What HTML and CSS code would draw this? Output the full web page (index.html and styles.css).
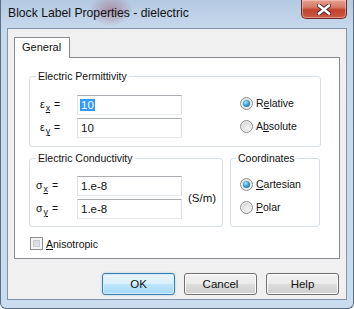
FILE: index.html
```html
<!DOCTYPE html>
<html lang="en">
<head>
  <meta charset="UTF-8" />
  <title>Block Label Properties - dielectric</title>
  <link rel="stylesheet" href="styles.css">
</head>
<body>

  <div class="window">
    <div class="titlebar">
      <span class="title">Block Label Properties - dielectric</span>
      <div class="close-btn">
        <svg width="14" height="11" viewBox="0 0 14 11">
          <path d="M2 1.5 L12 9.5 M12 1.5 L2 9.5" stroke="#4a2a28" stroke-width="4.4" stroke-linecap="round" />
          <path d="M2 1.5 L12 9.5 M12 1.5 L2 9.5" stroke="#ffffff" stroke-width="2.6" stroke-linecap="round" />
        </svg>
      </div>
    </div>

    <div class="client">
      <div class="tabs">
        <div class="tab active">General</div>
      </div>

      <div class="tab-panel">
        <!-- permittivity -->
        <fieldset class="group group-perm">
          <legend>Electric Permittivity</legend>
          <div class="fields">
            <div class="field-row">
              <span class="sym-label">&epsilon;<sub><u>x</u></sub> =</span>
              <div class="edit"><span class="selected">10</span></div>
            </div>
            <div class="field-row">
              <span class="sym-label">&epsilon;<sub><u>y</u></sub> =</span>
              <div class="edit">10</div>
            </div>
          </div>
          <div class="radios radios-perm">
            <div class="radio-row"><span class="radio checked"></span><span>R<u>e</u>lative</span></div>
            <div class="radio-row"><span class="radio"></span><span>A<u>b</u>solute</span></div>
          </div>
        </fieldset>

        <div class="group-row">
          <fieldset class="group group-cond">
            <legend>Electric Conductivity</legend>
            <div class="fields">
              <div class="field-row">
                <span class="sym-label">&sigma;<sub><u>x</u></sub> =</span>
                <div class="edit">1.e-8</div>
              </div>
              <div class="field-row">
                <span class="sym-label">&sigma;<sub><u>y</u></sub> =</span>
                <div class="edit">1.e-8</div>
              </div>
            </div>
            <span class="unit">(S/m)</span>
          </fieldset>

          <fieldset class="group group-coord">
            <legend>Coordinates</legend>
            <div class="radios">
              <div class="radio-row"><span class="radio checked"></span><span><u>C</u>artesian</span></div>
              <div class="radio-row"><span class="radio"></span><span><u>P</u>olar</span></div>
            </div>
          </fieldset>
        </div>

        <div class="check-row"><span class="checkbox"></span><span><u>A</u>nisotropic</span></div>
      </div>

      <div class="buttons">
        <button class="btn default">OK</button>
        <button class="btn">Cancel</button>
        <button class="btn">Help</button>
      </div>
    </div>
  </div>

</body>
</html>
```

FILE: styles.css
```css
body {
  margin: 0;
  font-family: 'Liberation Sans', Arial, sans-serif;
  font-size: 10.5px;
  color: #111;
}

.window {
  width: 354px;
  height: 309px;
  box-sizing: border-box;
  display: flex;
  flex-direction: column;
  border: 1px solid #5f6f82;
  border-top: none;
  border-radius: 0 0 6px 6px;
  background:
    radial-gradient(ellipse 22px 16px at 110px 10px, rgba(150, 70, 90, 0.45), rgba(150, 70, 90, 0) 100%),
    linear-gradient(#b4c9e2 0, #c6d8ec 28px, #cadcef 100%);
}

.titlebar {
  height: 28px;
  display: flex;
  justify-content: space-between;
  align-items: flex-start;
}

.title {
  font-size: 12.2px;
  padding: 6px 0 0 7px;
}

.close-btn {
  width: 46px;
  height: 19px;
  margin-right: 6px;
  box-sizing: border-box;
  border: 1px solid #6e2a22;
  border-top: none;
  border-radius: 0 0 5px 5px;
  background: linear-gradient(#e6a090 0, #d67a68 40%, #c2422f 55%, #c85a45 100%);
  box-shadow: inset 0 0 0 1px rgba(255, 210, 200, 0.5);
  display: flex;
  justify-content: center;
  align-items: center;
}

.client {
  flex: 1;
  margin: 0 6px 8px;
  border: 1px solid #8494a8;
  background: #f0f0f0;
  padding: 8px 6px 0;
  display: flex;
  flex-direction: column;
}

.tabs {
  display: flex;
}

.tab {
  height: 21px;
  box-sizing: border-box;
  padding: 0 8px 0 7px;
  line-height: 19px;
  font-size: 11px;
  border: 1px solid #898c95;
  border-bottom: none;
  background: #fff;
  position: relative;
  z-index: 1;
  margin-bottom: -1px;
}

.tab-panel {
  height: 202px;
  box-sizing: border-box;
  border: 1px solid #898c95;
  background: #fff;
  padding: 12px 18px 0 14px;
}

.group {
  margin: 0;
  min-width: 0;
  border: 1px solid #d5dfe5;
  border-radius: 3px;
  padding: 12px 0 8px 10px;
  display: flex;
}

.group legend {
  padding: 0 2px;
  margin-left: -4px;
  line-height: 13px;
}

.fields {
  display: flex;
  flex-direction: column;
  gap: 3px;
}

.field-row {
  display: flex;
  align-items: center;
  height: 20px;
}

.sym-label {
  width: 37px;
  padding-top: 1px;
}

.sym-label sub {
  font-size: 9px;
  vertical-align: -3px;
  margin-left: 1px;
  margin-right: 1px;
}

.edit {
  width: 105px;
  height: 20px;
  box-sizing: border-box;
  border: 1px solid;
  border-color: #abadb3 #dbdfe6 #e3e9ef #e2e3ea;
  background: #fff;
  padding-left: 3px;
  line-height: 18px;
  font-size: 11.5px;
}

.selected {
  background: #3399ff;
  color: #fff;
  padding: 0 1px;
  margin-left: -1px;
}

.radios {
  display: flex;
  flex-direction: column;
  gap: 3px;
  margin-top: -2px;
}

.radios-perm {
  margin-left: 58px;
}

.radio-row {
  display: flex;
  align-items: center;
  height: 20px;
  gap: 3px;
}

.radio {
  width: 13px;
  height: 13px;
  box-sizing: border-box;
  border-radius: 50%;
  border: 1px solid #8e8f8f;
  background: radial-gradient(circle at 60% 65%, #f4f4f4 0, #d8d8d8 70%, #c8c8c8 100%);
  box-shadow: inset 0 0 0 1px #f0f0f0;
  position: relative;
}

.radio.checked::after {
  content: "";
  position: absolute;
  left: 2px;
  top: 2px;
  width: 7px;
  height: 7px;
  border-radius: 50%;
  background: radial-gradient(circle at 40% 35%, #b4ecff 0, #3c9fd0 45%, #115a86 100%);
}

.group-row {
  display: flex;
  gap: 7px;
  margin-top: 5px;
}

.group-cond {
  width: 194px;
  box-sizing: border-box;
  padding: 11px 0 7px 6px;
}

.group-cond legend {
  margin-left: 0;
}

.group-cond .sym-label {
  width: 41px;
}

.unit {
  align-self: center;
  margin-left: 6px;
  font-size: 11.5px;
}

.group-coord {
  width: 90px;
  box-sizing: border-box;
  padding: 11px 0 7px 9px;
}

.check-row {
  display: flex;
  align-items: center;
  gap: 3px;
  margin: 10px 0 0 1px;
  height: 13px;
}

.checkbox {
  width: 13px;
  height: 13px;
  box-sizing: border-box;
  border: 1px solid #8e8f8f;
  box-shadow: inset 0 0 0 2px #f4f4f4, inset 0 0 0 3px #c8ccd2;
  background-image: linear-gradient(135deg, #c9cdd3, #eef0f2);
}

.buttons {
  display: flex;
  justify-content: flex-end;
  gap: 9px;
  margin-top: 14px;
  padding-right: 1px;
}

.btn {
  width: 73px;
  height: 22px;
  font-family: inherit;
  font-size: 11.5px;
  color: #111;
  border: 1px solid #707070;
  border-radius: 3px;
  background: linear-gradient(#f2f2f2 0, #ebebeb 50%, #dddddd 51%, #cfcfcf 100%);
  box-shadow: inset 0 0 0 1px #fcfcfc;
  padding: 0;
}

.btn.default {
  border-color: #3c7fb1;
  background: linear-gradient(#eaf6fd 0, #d9f0fc 50%, #bee6fd 51%, #a7d9f5 100%);
  box-shadow: inset 0 0 0 1px #d0ecfa, 0 0 2px rgba(60, 160, 220, 0.5);
}
```
